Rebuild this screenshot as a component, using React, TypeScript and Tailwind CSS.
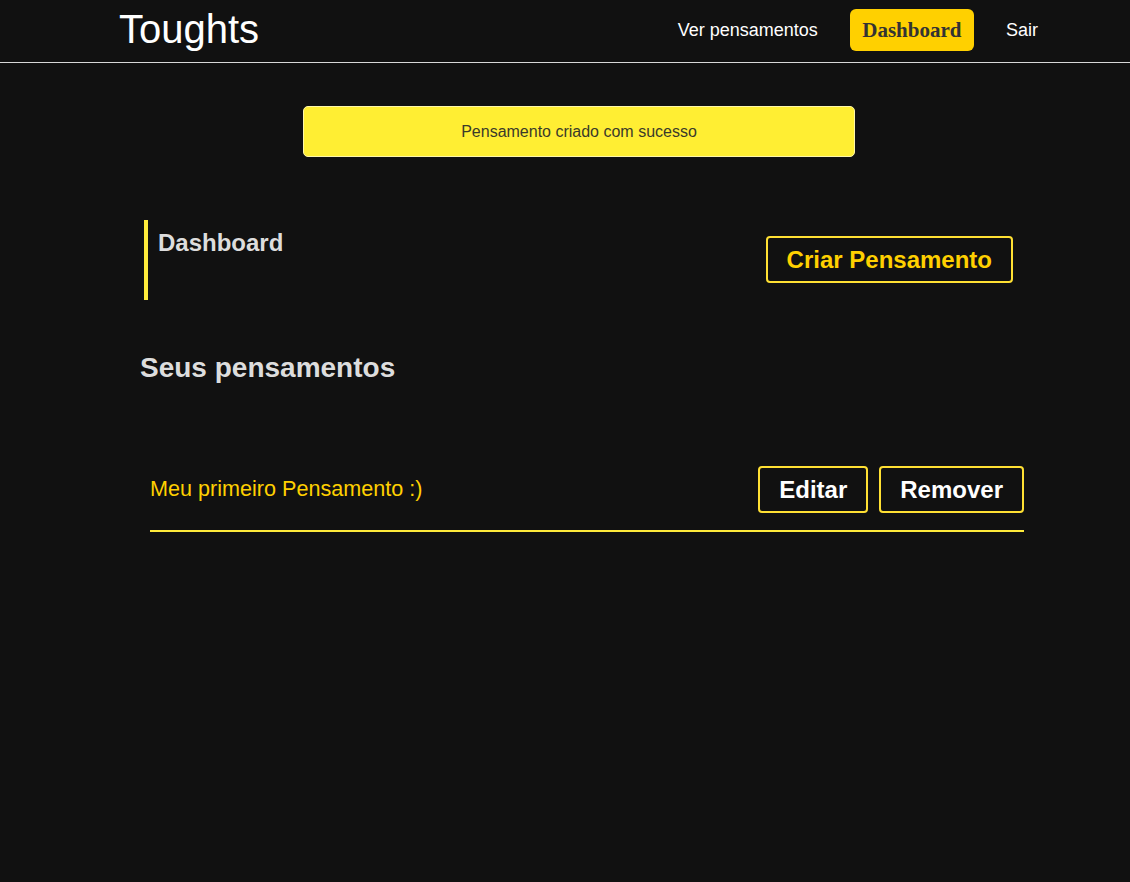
import React from "react";

// dashboard page of the "Toughts" app

const thoughts = [{ id: 1, title: "Meu primeiro Pensamento :)" }];

export default function App() {
  return (
    <div className="min-h-screen bg-[#111111] font-['Liberation_Sans',Arial,sans-serif]">
      {/* navbar */}
      <nav className="h-[63px] border-b border-[#d8d8d8] flex items-center justify-between pl-[119px] pr-[92px]">
        <h1 className="text-[40px] leading-[40px] text-white mb-[4px]">Toughts</h1>
        <ul className="flex items-center gap-8 mb-[2px]">
          <li className="text-[18px] text-white">Ver pensamentos</li>
          <li>
            <a className="block bg-[#ffd000] text-[#333333] rounded-[6px] px-[12.5px] py-[9px] text-[21px] leading-[24px] font-bold font-['Liberation_Serif','Times_New_Roman',serif]">
              Dashboard
            </a>
          </li>
          <li className="text-[18px] text-white">Sair</li>
        </ul>
      </nav>

      <main className="pb-10">
        {/* flash message */}
        <div className="mt-[43px] ml-[303px] w-[552px] h-[51px] flex items-center justify-center rounded-[5px] bg-[#ffee33] border border-[#fff7a8] text-[16px] text-[#3a3a2a]">
          Pensamento criado com sucesso
        </div>

        {/* dashboard header */}
        <div className="mt-[63px] ml-[144px] w-[869px] h-[80px] flex justify-between items-center border-l-4 border-[#ffeb3b]">
          <h1 className="self-start pt-[9px] pl-[10px] text-[24px] leading-[27.6px] font-bold text-[#dddddd]">
            Dashboard
          </h1>
          <button className="border-2 border-[#ffe033] rounded-[4px] px-[19px] py-[8px] mb-[1px] text-[24px] leading-[27px] font-bold text-[#ffd000]">
            Criar Pensamento
          </button>
        </div>

        <h2 className="mt-[52px] ml-[140px] text-[28px] leading-[32px] font-bold text-[#dddddd]">
          Seus pensamentos
        </h2>

        {/* thought list */}
        <div className="mt-[82px] ml-[150px] w-[874px]">
          {thoughts.map((t) => (
            <div
              key={t.id}
              className="flex items-center justify-between border-b-2 border-[#ffeb3b] pb-[17px]"
            >
              <span className="text-[21.6px] text-[#ffd000]">{t.title}</span>
              <div className="flex gap-[11px]">
                <button className="border-2 border-[#ffe033] rounded-[4px] px-[19px] py-[8px] text-[24px] leading-[27px] font-bold text-white">
                  Editar
                </button>
                <button className="border-2 border-[#ffe033] rounded-[4px] px-[19px] py-[8px] text-[24px] leading-[27px] font-bold text-white">
                  Remover
                </button>
              </div>
            </div>
          ))}
        </div>
      </main>
    </div>
  );
}
